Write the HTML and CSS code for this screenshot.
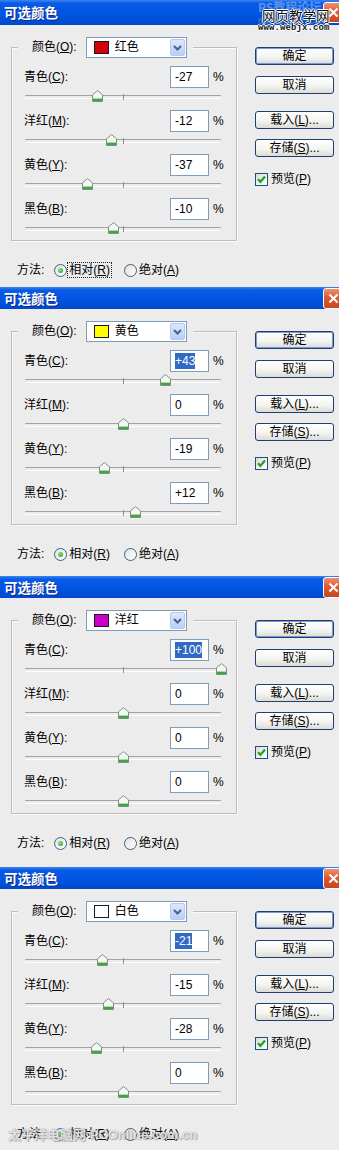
FILE: index.html
```html
<!DOCTYPE html>
<html lang="zh-CN">
<head>
<meta charset="utf-8">
<title>可选颜色</title>
<link rel="stylesheet" href="styles.css">
</head>
<body>
<svg class="sprite" width="0" height="0" aria-hidden="true">
  <symbol id="thumb" viewBox="0 0 11 12">
    <path d="M0.5 4.8 L5.5 0.6 L10.5 4.8 V11.5 H0.5 Z" fill="#f3f8f2" stroke="#7f8f86" stroke-width="1"/>
    <rect x="1" y="8.6" width="9" height="2.4" fill="#3aa83c"/>
  </symbol>
  <symbol id="chev" viewBox="0 0 9 6">
    <path d="M1 1 L4.5 4.5 L8 1" fill="none" stroke="#4d6185" stroke-width="2"/>
  </symbol>
  <symbol id="check" viewBox="0 0 11 11">
    <path d="M2 5.2 L4.4 7.8 L9 2.6" fill="none" stroke="#21a121" stroke-width="2.2"/>
  </symbol>
  <symbol id="xmark" viewBox="0 0 21 21">
    <path d="M6 6 L15 15 M15 6 L6 15" stroke="#fff" stroke-width="2.2"/>
  </symbol>
</svg>

<!-- Dialog 1 -->
<div class="dlg dlg-1">
  <div class="title"><span class="title-text">可选颜色</span><span class="close"><svg><use href="#xmark"/></svg></span></div>
  <div class="mark">
    <span class="mark-ps">PS教程论坛</span>
    <span class="mark-bbs">BBS.16XX8.COM</span>
    <span class="mark-cn">网页教学网</span>
    <span class="mark-url">www.webjx.com</span>
  </div>
  <div class="body">
    <div class="main">
      <div class="group">
        <div class="legend">
          <span class="legend-label">颜色(<u>O</u>):</span>
          <div class="combo"><span class="swatch sw-red"></span><span class="combo-text">红色</span><span class="combo-btn"><svg><use href="#chev"/></svg></span></div>
        </div>
        <div class="row">
          <div class="row-top"><span class="row-label">青色(<u>C</u>):</span><span class="field">-27</span><span class="pct">%</span></div>
          <div class="slider"><span class="tick"></span><svg class="thumb" style="left:36.5%"><use href="#thumb"/></svg></div>
        </div>
        <div class="row">
          <div class="row-top"><span class="row-label">洋红(<u>M</u>):</span><span class="field">-12</span><span class="pct">%</span></div>
          <div class="slider"><span class="tick"></span><svg class="thumb" style="left:44%"><use href="#thumb"/></svg></div>
        </div>
        <div class="row">
          <div class="row-top"><span class="row-label">黄色(<u>Y</u>):</span><span class="field">-37</span><span class="pct">%</span></div>
          <div class="slider"><span class="tick"></span><svg class="thumb" style="left:31.5%"><use href="#thumb"/></svg></div>
        </div>
        <div class="row">
          <div class="row-top"><span class="row-label">黑色(<u>B</u>):</span><span class="field">-10</span><span class="pct">%</span></div>
          <div class="slider"><span class="tick"></span><svg class="thumb" style="left:45%"><use href="#thumb"/></svg></div>
        </div>
      </div>
      <div class="method">
        <span class="method-label">方法:</span>
        <span class="opt"><span class="radio on"></span><span class="opt-text focus">相对(<u>R</u>)</span></span>
        <span class="opt"><span class="radio"></span><span class="opt-text">绝对(<u>A</u>)</span></span>
      </div>
    </div>
    <div class="side">
      <button class="btn btn-default">确定</button>
      <button class="btn btn-cancel">取消</button>
      <button class="btn btn-load">载入(<u>L</u>)...</button>
      <button class="btn btn-save">存储(<u>S</u>)...</button>
      <span class="check"><span class="box"><svg><use href="#check"/></svg></span>预览(<u>P</u>)</span>
    </div>
  </div>
</div>

<!-- Dialog 2 -->
<div class="dlg dlg-2">
  <div class="title"><span class="title-text">可选颜色</span><span class="close"><svg><use href="#xmark"/></svg></span></div>
  <div class="body">
    <div class="main">
      <div class="group">
        <div class="legend">
          <span class="legend-label">颜色(<u>O</u>):</span>
          <div class="combo"><span class="swatch sw-yellow"></span><span class="combo-text">黄色</span><span class="combo-btn"><svg><use href="#chev"/></svg></span></div>
        </div>
        <div class="row">
          <div class="row-top"><span class="row-label">青色(<u>C</u>):</span><span class="field"><span class="sel">+43</span></span><span class="pct">%</span></div>
          <div class="slider"><span class="tick"></span><svg class="thumb" style="left:71.5%"><use href="#thumb"/></svg></div>
        </div>
        <div class="row">
          <div class="row-top"><span class="row-label">洋红(<u>M</u>):</span><span class="field">0</span><span class="pct">%</span></div>
          <div class="slider"><span class="tick"></span><svg class="thumb" style="left:50%"><use href="#thumb"/></svg></div>
        </div>
        <div class="row">
          <div class="row-top"><span class="row-label">黄色(<u>Y</u>):</span><span class="field">-19</span><span class="pct">%</span></div>
          <div class="slider"><span class="tick"></span><svg class="thumb" style="left:40.5%"><use href="#thumb"/></svg></div>
        </div>
        <div class="row">
          <div class="row-top"><span class="row-label">黑色(<u>B</u>):</span><span class="field">+12</span><span class="pct">%</span></div>
          <div class="slider"><span class="tick"></span><svg class="thumb" style="left:56%"><use href="#thumb"/></svg></div>
        </div>
      </div>
      <div class="method">
        <span class="method-label">方法:</span>
        <span class="opt"><span class="radio on"></span><span class="opt-text">相对(<u>R</u>)</span></span>
        <span class="opt"><span class="radio"></span><span class="opt-text">绝对(<u>A</u>)</span></span>
      </div>
    </div>
    <div class="side">
      <button class="btn btn-default">确定</button>
      <button class="btn btn-cancel">取消</button>
      <button class="btn btn-load">载入(<u>L</u>)...</button>
      <button class="btn btn-save">存储(<u>S</u>)...</button>
      <span class="check"><span class="box"><svg><use href="#check"/></svg></span>预览(<u>P</u>)</span>
    </div>
  </div>
</div>

<!-- Dialog 3 -->
<div class="dlg dlg-3">
  <div class="title"><span class="title-text">可选颜色</span><span class="close"><svg><use href="#xmark"/></svg></span></div>
  <div class="body">
    <div class="main">
      <div class="group">
        <div class="legend">
          <span class="legend-label">颜色(<u>O</u>):</span>
          <div class="combo"><span class="swatch sw-magenta"></span><span class="combo-text">洋红</span><span class="combo-btn"><svg><use href="#chev"/></svg></span></div>
        </div>
        <div class="row">
          <div class="row-top"><span class="row-label">青色(<u>C</u>):</span><span class="field"><span class="sel">+100</span></span><span class="pct">%</span></div>
          <div class="slider"><span class="tick"></span><svg class="thumb" style="left:100%"><use href="#thumb"/></svg></div>
        </div>
        <div class="row">
          <div class="row-top"><span class="row-label">洋红(<u>M</u>):</span><span class="field">0</span><span class="pct">%</span></div>
          <div class="slider"><span class="tick"></span><svg class="thumb" style="left:50%"><use href="#thumb"/></svg></div>
        </div>
        <div class="row">
          <div class="row-top"><span class="row-label">黄色(<u>Y</u>):</span><span class="field">0</span><span class="pct">%</span></div>
          <div class="slider"><span class="tick"></span><svg class="thumb" style="left:50%"><use href="#thumb"/></svg></div>
        </div>
        <div class="row">
          <div class="row-top"><span class="row-label">黑色(<u>B</u>):</span><span class="field">0</span><span class="pct">%</span></div>
          <div class="slider"><span class="tick"></span><svg class="thumb" style="left:50%"><use href="#thumb"/></svg></div>
        </div>
      </div>
      <div class="method">
        <span class="method-label">方法:</span>
        <span class="opt"><span class="radio on"></span><span class="opt-text">相对(<u>R</u>)</span></span>
        <span class="opt"><span class="radio"></span><span class="opt-text">绝对(<u>A</u>)</span></span>
      </div>
    </div>
    <div class="side">
      <button class="btn btn-default">确定</button>
      <button class="btn btn-cancel">取消</button>
      <button class="btn btn-load">载入(<u>L</u>)...</button>
      <button class="btn btn-save">存储(<u>S</u>)...</button>
      <span class="check"><span class="box"><svg><use href="#check"/></svg></span>预览(<u>P</u>)</span>
    </div>
  </div>
</div>

<!-- Dialog 4 -->
<div class="dlg dlg-4">
  <div class="title"><span class="title-text">可选颜色</span><span class="close"><svg><use href="#xmark"/></svg></span></div>
  <div class="body">
    <div class="main">
      <div class="group">
        <div class="legend">
          <span class="legend-label">颜色(<u>O</u>):</span>
          <div class="combo"><span class="swatch sw-white"></span><span class="combo-text">白色</span><span class="combo-btn"><svg><use href="#chev"/></svg></span></div>
        </div>
        <div class="row">
          <div class="row-top"><span class="row-label">青色(<u>C</u>):</span><span class="field"><span class="sel">-21</span></span><span class="pct">%</span></div>
          <div class="slider"><span class="tick"></span><svg class="thumb" style="left:39.5%"><use href="#thumb"/></svg></div>
        </div>
        <div class="row">
          <div class="row-top"><span class="row-label">洋红(<u>M</u>):</span><span class="field">-15</span><span class="pct">%</span></div>
          <div class="slider"><span class="tick"></span><svg class="thumb" style="left:42.5%"><use href="#thumb"/></svg></div>
        </div>
        <div class="row">
          <div class="row-top"><span class="row-label">黄色(<u>Y</u>):</span><span class="field">-28</span><span class="pct">%</span></div>
          <div class="slider"><span class="tick"></span><svg class="thumb" style="left:36%"><use href="#thumb"/></svg></div>
        </div>
        <div class="row">
          <div class="row-top"><span class="row-label">黑色(<u>B</u>):</span><span class="field">0</span><span class="pct">%</span></div>
          <div class="slider"><span class="tick"></span><svg class="thumb" style="left:50%"><use href="#thumb"/></svg></div>
        </div>
      </div>
      <div class="method">
        <span class="method-label">方法:</span>
        <span class="opt"><span class="radio on"></span><span class="opt-text">相对(<u>R</u>)</span></span>
        <span class="opt"><span class="radio"></span><span class="opt-text">绝对(<u>A</u>)</span></span>
      </div>
    </div>
    <div class="side">
      <button class="btn btn-default">确定</button>
      <button class="btn btn-cancel">取消</button>
      <button class="btn btn-load">载入(<u>L</u>)...</button>
      <button class="btn btn-save">存储(<u>S</u>)...</button>
      <span class="check"><span class="box"><svg><use href="#check"/></svg></span>预览(<u>P</u>)</span>
    </div>
  </div>
  <div class="mark-bottom">太平洋电脑网 PCOnline.com.cn</div>
</div>
</body>
</html>
```

FILE: styles.css
```css
* { box-sizing: border-box; }

html, body {
  margin: 0;
  padding: 0;
}

body {
  width: 339px;
  height: 1150px;
  overflow: hidden;
  background: #ececec;
  color: #000;
  font: 12px/1.2 "Liberation Sans", "Noto Sans CJK SC", sans-serif;
}

.sprite {
  display: block;
  width: 0;
  height: 0;
  overflow: hidden;
}

u { text-decoration: underline; text-underline-offset: 1px; }

/* ---------- dialog frame ---------- */
.dlg {
  position: relative;
  height: 289px;
  overflow: hidden;
  background: #ececec;
}
.dlg-1 { height: 287px; }
.dlg-3 { height: 291px; }
.dlg-4 { height: 283px; }

.title {
  position: relative;
  height: 22px;
  display: flex;
  align-items: center;
  padding-left: 4px;
  background: linear-gradient(#3d86f2 0, #0a5be6 3px, #0055e2 55%, #0048cc 100%);
  color: #fff;
}
.dlg-1 .title { height: 25px; }

.title-text {
  font-size: 13.5px;
  font-weight: bold;
  text-shadow: 1px 1px 0 #0b2a8c;
  font-family: "Noto Sans CJK SC", sans-serif;
}

.close {
  position: absolute;
  left: 323px;
  top: 1px;
  width: 21px;
  height: 21px;
  border: 1px solid #fff;
  border-radius: 3px;
  background: linear-gradient(#ec9170 0, #df5a31 45%, #c9451f 100%);
}
.dlg-1 .close { top: 2px; }
.close svg { display: block; width: 19px; height: 19px; }

/* ---------- body layout ---------- */
.body {
  display: flex;
  align-items: flex-start;
}

.main {
  width: 237px;
  padding-left: 11px;
}

.group {
  width: 226px;
  margin-top: 22px;
  padding: 0 12px 6px 12px;
  border: 1px solid #bdbdbd;
  box-shadow: inset 1px 1px 0 #fafafa, 1px 1px 0 #fafafa;
}

.legend {
  display: flex;
  align-items: center;
  width: fit-content;
  height: 21px;
  margin: -11px 0 0 -6px;
  padding: 0 6px 0 14px;
  background: #ececec;
}

.legend-label { margin-right: 9px; }

.combo {
  display: flex;
  align-items: center;
  width: 101px;
  height: 21px;
  padding-left: 7px;
  border: 1px solid #7f9db9;
  background: #fff;
}

.swatch {
  width: 15px;
  height: 13px;
  border: 1px solid #1a1a1a;
}
.sw-red { background: #d4000c; }
.sw-yellow { background: #ffff00; }
.sw-magenta { background: #cc00cc; }
.sw-white { background: #fff; }

.combo-text { margin-left: 6px; }

.combo-btn {
  display: flex;
  align-items: center;
  justify-content: center;
  width: 15px;
  height: 17px;
  margin-left: auto;
  margin-right: 1px;
  border: 1px solid #b4c8f3;
  border-radius: 2px;
  background: linear-gradient(#dce7fd, #b9cff9);
}
.combo-btn svg { width: 9px; height: 6px; display: block; }

/* ---------- rows ---------- */
.row { margin-top: 8px; }

.row-top {
  display: flex;
  align-items: center;
  height: 22px;
}

.row-label { flex: 1; }

.field {
  display: flex;
  align-items: center;
  width: 39px;
  height: 22px;
  padding-left: 4px;
  border: 1px solid #7f9db9;
  background: #fff;
}

.sel {
  background: #316ac5;
  color: #fff;
  line-height: 16px;
}

.pct {
  width: 11px;
  margin-left: 4px;
}

.slider {
  position: relative;
  width: 196px;
  height: 14px;
  margin-left: 1px;
}
.slider::before {
  content: "";
  position: absolute;
  left: 0;
  right: 0;
  top: 7px;
  height: 2px;
  border-top: 1px solid #a2a2a2;
  border-bottom: 1px solid #fff;
  border-radius: 1px;
}
.tick {
  position: absolute;
  left: 50%;
  top: 6px;
  width: 1px;
  height: 6px;
  background: #8f8f8f;
}
.thumb {
  position: absolute;
  top: 2px;
  width: 11px;
  height: 12px;
  margin-left: -5px;
}

/* ---------- method row ---------- */
.method {
  display: flex;
  align-items: center;
  height: 20px;
  margin-top: 19px;
  padding-left: 6px;
}

.method-label { margin-right: 10px; }

.opt {
  display: flex;
  align-items: center;
}
.opt + .opt { margin-left: 12px; }

.radio {
  position: relative;
  width: 13px;
  height: 13px;
  border: 1px solid #3a5f8a;
  border-radius: 50%;
  background: linear-gradient(135deg, #e2e2dc, #fff);
}
.radio.on::after {
  content: "";
  position: absolute;
  left: 3px;
  top: 3px;
  width: 5px;
  height: 5px;
  border-radius: 50%;
  background: radial-gradient(circle at 35% 35%, #8be08b, #1f9f1f);
}

.opt-text {
  padding: 0 1px;
  border: 1px solid transparent;
  line-height: 14px;
}
.opt-text.focus { border: 1px dotted #222; }

/* ---------- right column ---------- */
.side {
  display: flex;
  flex-direction: column;
  align-items: flex-start;
  width: 79px;
  margin-left: 18px;
  margin-top: 22px;
}

.btn {
  width: 79px;
  height: 18px;
  padding: 0;
  border: 1px solid #1f3f6e;
  border-radius: 3px;
  background: linear-gradient(#ffffff 0, #f4f4f1 55%, #dcdcd5 100%);
  color: #000;
  font: inherit;
  line-height: 15px;
  text-align: center;
}
.btn-default { box-shadow: inset 0 0 0 1px #7d97d8; }
.btn-cancel { margin-top: 11px; }
.btn-load { margin-top: 17px; }
.btn-save { margin-top: 10px; }

.check {
  display: flex;
  align-items: center;
  margin-top: 16px;
  line-height: 13px;
}
.box {
  width: 13px;
  height: 13px;
  margin-right: 3px;
  border: 1px solid #1c5180;
  background: linear-gradient(135deg, #dcdcd7, #fff);
}
.box svg { display: block; width: 11px; height: 11px; }

/* ---------- watermarks ---------- */
.mark {
  position: absolute;
  left: 256px;
  top: 0;
  width: 83px;
  height: 36px;
  pointer-events: none;
}
.mark span {
  position: absolute;
  white-space: nowrap;
}
.mark-ps {
  left: 2px;
  top: 0;
  font-size: 12px;
  line-height: 13px;
  font-weight: bold;
  color: rgba(220, 235, 255, 0.4);
  font-family: "Noto Sans CJK SC", sans-serif;
}
.mark-bbs {
  left: 2px;
  top: 17px;
  font: bold 8.5px "Liberation Mono", monospace;
  color: rgba(150, 170, 200, 0.4);
}
.mark-cn {
  left: 6px;
  top: 8px;
  font-size: 13.5px;
  line-height: 15px;
  font-family: "Noto Sans CJK SC", sans-serif;
  color: #111;
  text-shadow: 1px 0 0 #fff, -1px 0 0 #fff, 0 1px 0 #fff, 0 -1px 0 #fff;
}
.mark-url {
  left: 2px;
  top: 23px;
  font: bold 9px/10px "Liberation Mono", monospace;
  letter-spacing: 0.1px;
  color: #111;
  text-shadow: 1px 0 0 #fff, -1px 0 0 #fff, 0 1px 0 #fff, 0 -1px 0 #fff;
}

.mark-bottom {
  position: absolute;
  left: 8px;
  top: 260px;
  font-size: 13px;
  font-weight: bold;
  white-space: nowrap;
  color: rgba(255, 255, 255, 0.8);
  text-shadow: 0 0 1px rgba(60, 60, 60, 0.6), 1px 1px 1px rgba(90, 90, 90, 0.4);
  pointer-events: none;
}
```
